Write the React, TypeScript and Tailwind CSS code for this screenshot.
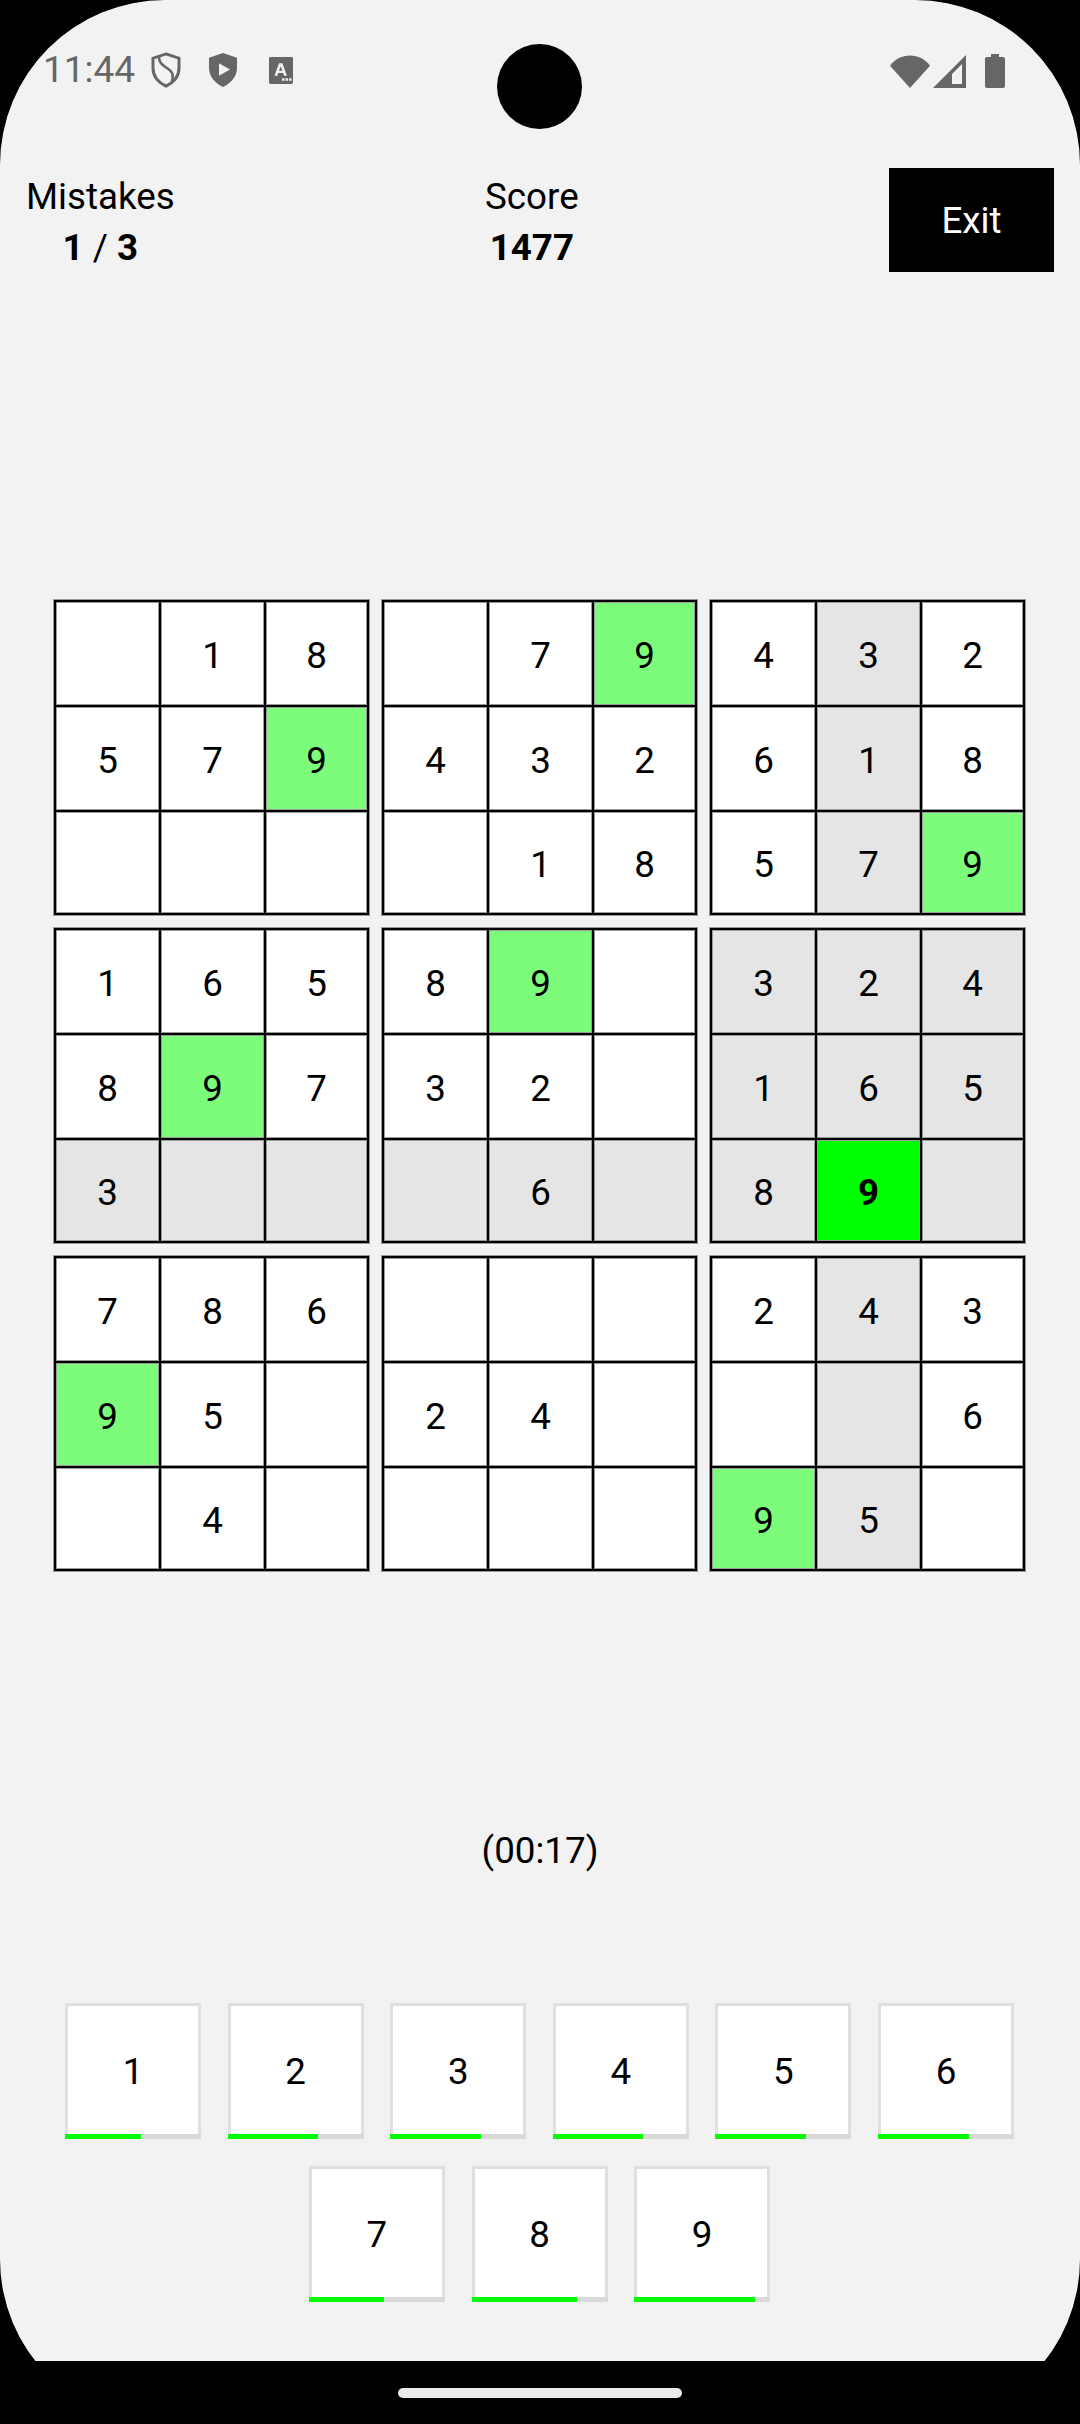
import React from "react";

// g = grey highlight, m = matching digit, a = selected cell
type Cell = { v?: number; t?: "g" | "m" | "a" };

const n = (v?: number, t?: Cell["t"]): Cell => ({ v, t });

const blocks: Cell[][] = [
  [n(), n(1), n(8), n(5), n(7), n(9, "m"), n(), n(), n()],
  [n(), n(7), n(9, "m"), n(4), n(3), n(2), n(), n(1), n(8)],
  [n(4), n(3, "g"), n(2), n(6), n(1, "g"), n(8), n(5), n(7, "g"), n(9, "m")],
  [n(1), n(6), n(5), n(8), n(9, "m"), n(7), n(3, "g"), n(undefined, "g"), n(undefined, "g")],
  [n(8), n(9, "m"), n(), n(3), n(2), n(), n(undefined, "g"), n(6, "g"), n(undefined, "g")],
  [n(3, "g"), n(2, "g"), n(4, "g"), n(1, "g"), n(6, "g"), n(5, "g"), n(8, "g"), n(9, "a"), n(undefined, "g")],
  [n(7), n(8), n(6), n(9, "m"), n(5), n(), n(), n(4), n()],
  [n(), n(), n(), n(2), n(4), n(), n(), n(), n()],
  [n(2), n(4, "g"), n(3), n(), n(undefined, "g"), n(6), n(9, "m"), n(5, "g"), n()],
];

const placed: Record<number, number> = { 1: 5, 2: 6, 3: 6, 4: 6, 5: 6, 6: 6, 7: 5, 8: 7, 9: 8 };

const cellBg = (t?: Cell["t"]) => {
  if (t === "g") return "bg-[#e5e5e5]";
  if (t === "m") return "bg-[#7dfc7b]";
  if (t === "a") return "bg-[#00ff00] font-bold";
  return "bg-white";
};

const NumKey = ({ d }: { d: number }) => (
  <div className="w-[136px] h-[136px] flex flex-col">
    <div className="flex-1 flex items-center justify-center pt-[3px] bg-white border-[3px] border-b-0 border-[#dfdfdf]">{d}</div>
    <div className="h-[5px] bg-[#d9d9d9]">
      <div className="h-full bg-[#00ff00]" style={{ width: `${(placed[d] / 9) * 100}%` }} />
    </div>
  </div>
);

const StatusBar = () => (
  <div className="h-[168px] pl-[43px] pr-[75px] pt-[48px] flex justify-between items-start text-[#666666]">
    <div className="flex items-center">
      <span className="text-[37px] leading-[44px] w-[108px]">11:44</span>
      <svg width="30" height="36" viewBox="0 0 30 38" preserveAspectRatio="none" fill="none" stroke="#666666" strokeWidth="3">
        <path d="M15 2 L28 6.5 V17 C28 26 22 32.5 15 36 C8 32.5 2 26 2 17 V6.5 Z" />
        <path d="M8 5 C8 12 12 14 16 17 C21 20.5 23 23 21 31" strokeWidth="2.6" />
      </svg>
      <svg className="ml-[27px]" width="30" height="36" viewBox="0 0 30 38" preserveAspectRatio="none" fill="#666666">
        <path fillRule="evenodd" d="M15 1 L29 6 V17 C29 26 23 33 15 37 C7 33 1 26 1 17 V6 Z M11 12 V25 L22 18.500 Z" />
      </svg>
      <svg className="ml-[31px]" width="24" height="27" viewBox="0 0 24 28" preserveAspectRatio="none" fill="#666666">
        <path fillRule="evenodd" d="M1.500 0 H22.500 A1.500 1.500 0 0 1 24 1.500 V26.500 A1.500 1.500 0 0 1 22.500 28 H1.500 A1.500 1.500 0 0 1 0 26.500 V1.500 A1.500 1.500 0 0 1 1.500 0 Z M10 6.500 L5.500 19.500 H8.300 L9.200 16.700 H14.200 L15.100 19.500 H17.900 L13.400 6.500 Z M10 14.300 L11.700 9.500 L13.400 14.300 Z M13 22 H15.500 V24.500 H13 Z M16.500 22 H19 V24.500 H16.500 Z M20 22 H22.500 V24.500 H20 Z" />
      </svg>
    </div>
    <div className="flex items-center pt-[6px]">
      <svg width="40" height="33" viewBox="0 0 40 34" preserveAspectRatio="none" fill="#666666">
        <path d="M20 34 L0 11 C5 4 12 0.500 20 0.500 C28 0.500 35 4 40 11 Z" />
      </svg>
      <svg className="ml-[3px]" width="33" height="33" viewBox="0 0 33 33" fill="#666666">
        <path fillRule="evenodd" d="M33 0 V33 H0 Z M29 9 L19 19 V29 H29 Z" />
      </svg>
      <svg className="ml-[19px]" width="20" height="34" viewBox="0 0 20 35" preserveAspectRatio="none" fill="#666666">
        <path d="M6 0 H14 V3 H18 A2 2 0 0 1 20 5 V33 A2 2 0 0 1 18 35 H2 A2 2 0 0 1 0 33 V5 A2 2 0 0 1 2 3 H6 Z" />
      </svg>
    </div>
  </div>
);

export default function App() {
  return (
    <div className="w-[1080px] h-[2424px] bg-black relative overflow-hidden font-['Roboto',sans-serif] text-[36.75px] leading-[52px] text-black">
      <div className="h-full bg-[#f2f2f2] rounded-[165px] overflow-hidden">
        <StatusBar />

        <div className="flex justify-between px-[26px] h-[104px]">
          <div className="flex flex-col items-center pt-[3px] leading-[51px]">
            <span>Mistakes</span>
            <span className="font-bold">1 <span className="font-normal">/</span> 3</span>
          </div>
          <div className="flex flex-col items-center pt-[3px] leading-[51px]">
            <span>Score</span>
            <span className="font-bold">1477</span>
          </div>
          <div className="w-[165px] pt-[2px] bg-black text-white flex items-center justify-center">Exit</div>
        </div>

        <div className="mt-[328px] ml-[54px] w-[971px] grid grid-cols-3 gap-[13px]">
          {blocks.map((block, i) => (
            <div
              key={i}
              className="h-[315px] grid grid-cols-[105px_105px_103px] grid-rows-[105px_105px_103px] border border-black shadow-[0_0_0_1px_#9a9a9a]"
            >
              {block.map((c, j) => (
                <div
                  key={j}
                  className={`flex items-center justify-center pt-[4px] border border-black shadow-[inset_0_0_0_1px_#9a9a9a] ${cellBg(c.t)}`}
                >
                  {c.v}
                </div>
              ))}
            </div>
          ))}
        </div>

        <div className="mt-[254px] text-center">(00:17)</div>

        <div className="mt-[126px] w-[1079px] flex flex-col items-center gap-[27px]">
          <div className="flex gap-[26.6px]">
            {[1, 2, 3, 4, 5, 6].map((d) => <NumKey key={d} d={d} />)}
          </div>
          <div className="flex gap-[26.6px]">
            {[7, 8, 9].map((d) => <NumKey key={d} d={d} />)}
          </div>
        </div>
      </div>

      {/* camera cutout */}
      <div className="absolute left-[497px] top-[44px] w-[85px] h-[85px] rounded-full bg-black" />

      {/* nav bar */}
      <div className="absolute left-0 right-0 bottom-0 h-[63px] bg-black flex justify-center pt-[27px]">
        <div className="w-[284px] h-[10px] rounded-full bg-[#ebebeb]" />
      </div>
    </div>
  );
}
